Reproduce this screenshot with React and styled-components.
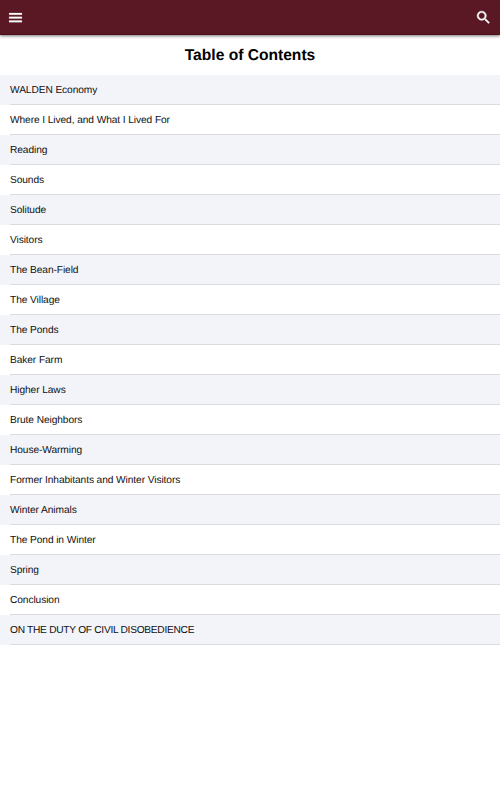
import React from 'react';
import styled, { createGlobalStyle } from 'styled-components';

const GlobalStyle = createGlobalStyle`
  * {
    box-sizing: border-box;
  }

  body {
    margin: 0;
    background: #fff;
    color: #000;
    font-family: 'Liberation Sans', Arial, sans-serif;
    text-rendering: geometricPrecision;
  }
`;

const Page = styled.div`
  min-height: 800px;
  background: #fff;
`;

const Toolbar = styled.header`
  display: flex;
  align-items: center;
  justify-content: space-between;
  height: 35px;
  padding: 0 8px 0 7px;
  border-bottom: 1px solid #4d0e18;
  background: #5a1724;
  box-shadow: 0 1px 3px rgba(0, 0, 0, 0.55);
`;

const IconButton = styled.button`
  display: flex;
  padding: 1px 0 0;
  border: 0;
  background: none;
  color: #fff;

  svg {
    width: 17px;
    height: 17px;
    fill: currentColor;
    stroke: currentColor;
    stroke-width: ${({ $stroke }) => $stroke};
  }
`;

const Title = styled.h1`
  height: 40px;
  margin: 0;
  padding-top: 1px;
  font-size: 15.6px;
  line-height: 40px;
  text-align: center;
`;

const ChapterList = styled.ul`
  margin: 0;
  padding: 0;
  list-style: none;
`;

const Chapter = styled.li`
  height: 30px;
  padding-left: 10px;

  &:nth-child(odd) {
    background: #f3f4f9;
  }
`;

const ChapterLink = styled.div`
  height: 30px;
  padding-top: 2px;
  border-bottom: 1px solid #dcdcdf;
  color: #111;
  font-size: 10.2px;
  line-height: 28px;
  letter-spacing: ${({ $tight }) => ($tight ? '-0.28px' : '-0.09px')};
  white-space: nowrap;
`;

const chapters = [
  'WALDEN Economy',
  'Where I Lived, and What I Lived For',
  'Reading',
  'Sounds',
  'Solitude',
  'Visitors',
  'The Bean-Field',
  'The Village',
  'The Ponds',
  'Baker Farm',
  'Higher Laws',
  'Brute Neighbors',
  'House-Warming',
  'Former Inhabitants and Winter Visitors',
  'Winter Animals',
  'The Pond in Winter',
  'Spring',
  'Conclusion',
  'ON THE DUTY OF CIVIL DISOBEDIENCE',
];

const App = () => {
  return (
    <Page>
      <GlobalStyle />
      <Toolbar>
        <IconButton aria-label="Menu" $stroke={0.3}>
          <svg viewBox="0 0 24 24">
            <path d="M3 18.6h18v-2.4H3v2.4zm0-5.2h18V11H3v2.4zm0-7.8V8h18V5.6H3z" />
          </svg>
        </IconButton>
        <IconButton aria-label="Search" $stroke={0.7}>
          <svg viewBox="0 0 24 24">
            <path d="M15.5 14h-.79l-.28-.27A6.471 6.471 0 0 0 16 9.5 6.5 6.5 0 1 0 9.5 16c1.61 0 3.09-.59 4.23-1.57l.27.28v.79l5 4.99L20.49 19l-4.99-5zm-6 0C7.01 14 5 11.99 5 9.5S7.01 5 9.5 5 14 7.01 14 9.5 11.99 14 9.5 14z" />
          </svg>
        </IconButton>
      </Toolbar>
      <Title>Table of Contents</Title>
      <ChapterList>
        {chapters.map((name) => (
          <Chapter key={name}>
            <ChapterLink $tight={name === name.toUpperCase()}>{name}</ChapterLink>
          </Chapter>
        ))}
      </ChapterList>
    </Page>
  );
};

export default App;
